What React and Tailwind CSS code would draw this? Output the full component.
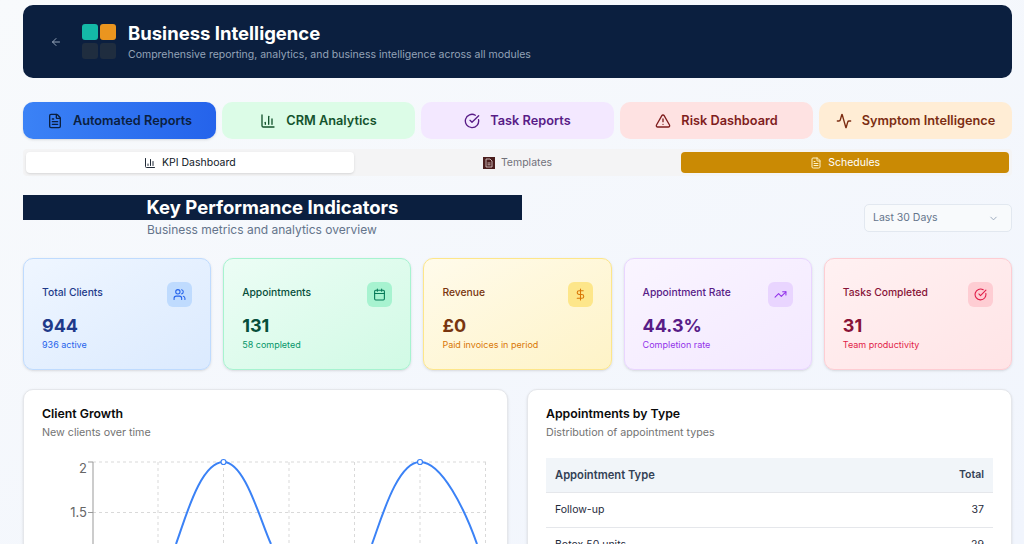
import { ArrowLeft, FileText, BarChart3, CircleCheckBig, TriangleAlert, Activity, ChevronDown, Users, Calendar, DollarSign, TrendingUp } from "lucide-react";

const mainTabs = [
  { label: "Automated Reports", icon: FileText, box: "bg-gradient-to-r from-[#3b82f6] to-[#2563eb] shadow-sm", text: "text-[#0b1f3f]" },
  { label: "CRM Analytics", icon: BarChart3, box: "bg-[#dcfce7]", text: "text-[#14532d]" },
  { label: "Task Reports", icon: CircleCheckBig, box: "bg-[#f3e8ff]", text: "text-[#581c87]" },
  { label: "Risk Dashboard", icon: TriangleAlert, box: "bg-[#fee2e2]", text: "text-[#7f1d1d]" },
  { label: "Symptom Intelligence", icon: Activity, box: "bg-[#ffedd5]", text: "text-[#7c2d12]" },
];

const kpis = [
  { title: "Total Clients", value: "944", note: "936 active", icon: Users, box: "from-[#eff6ff] to-[#dbeafe] border-[#bfdbfe]", titleC: "text-[#1e3a8a]", valueC: "text-[#1e3a8a]", noteC: "text-[#2563eb]", iconBox: "bg-[#bfdbfe]", iconC: "text-[#2563eb]" },
  { title: "Appointments", value: "131", note: "58 completed", icon: Calendar, box: "from-[#ecfdf5] to-[#d1fae5] border-[#a7f3d0]", titleC: "text-[#064e3b]", valueC: "text-[#064e3b]", noteC: "text-[#059669]", iconBox: "bg-[#a7f3d0]", iconC: "text-[#047857]" },
  { title: "Revenue", value: "£0", note: "Paid invoices in period", icon: DollarSign, box: "from-[#fffbeb] to-[#fef3c7] border-[#fde68a]", titleC: "text-[#78350f]", valueC: "text-[#78350f]", noteC: "text-[#d97706]", iconBox: "bg-[#fde68a]", iconC: "text-[#d97706]" },
  { title: "Appointment Rate", value: "44.3%", note: "Completion rate", icon: TrendingUp, box: "from-[#faf5ff] to-[#f3e8ff] border-[#e9d5ff]", titleC: "text-[#581c87]", valueC: "text-[#581c87]", noteC: "text-[#9333ea]", iconBox: "bg-[#e9d5ff]", iconC: "text-[#9333ea]" },
  { title: "Tasks Completed", value: "31", note: "Team productivity", icon: CircleCheckBig, box: "from-[#fff1f2] to-[#ffe4e6] border-[#fecdd3]", titleC: "text-[#881337]", valueC: "text-[#881337]", noteC: "text-[#e11d48]", iconBox: "bg-[#fecdd3]", iconC: "text-[#e11d48]" },
];

const gridXs = [158, 223.5, 289, 354.5, 420, 485.5];

const GrowthChart = () => (
  <svg className="mt-[14px] block h-[88px] w-[483px]" viewBox="24 456 483 88">
    {gridXs.map((x) => (
      <line key={x} x1={x} y1="462" x2={x} y2="544" stroke="#d9d9d9" strokeDasharray="3 3" />
    ))}
    <line x1="93" y1="462" x2="486" y2="462" stroke="#d9d9d9" strokeDasharray="3 3" />
    <line x1="93" y1="512.500" x2="486" y2="512.500" stroke="#d9d9d9" strokeDasharray="3 3" />
    <line x1="93" y1="462" x2="93" y2="544" stroke="#999999" />
    <line x1="88" y1="462" x2="93" y2="462" stroke="#999999" />
    <line x1="88" y1="512.500" x2="93" y2="512.500" stroke="#999999" />
    <text x="87" y="473" textAnchor="end" fontSize="13" fill="#666666" fontFamily="Inter, sans-serif">2</text>
    <text x="87" y="517" textAnchor="end" fontSize="13" fill="#666666" fontFamily="Inter, sans-serif">1.5</text>
    <path d="M176 544 C185 520 200 462 223.5 462 C245 462 260 520 271 544" fill="none" stroke="#3b82f6" strokeWidth="2" />
    <path d="M372 544 C381 520 397 462 420 462 C442 462 465 510 477 544" fill="none" stroke="#3b82f6" strokeWidth="2" />
    <circle cx="223.5" cy="462" r="2.5" fill="#fff" stroke="#3b82f6" strokeWidth="1.2" />
    <circle cx="420" cy="462" r="2.5" fill="#fff" stroke="#3b82f6" strokeWidth="1.2" />
  </svg>
);

const App = () => {
  return (
    <div className="h-[544px] w-[1024px] overflow-hidden bg-gradient-to-br from-[#f8fafc] to-[#f1f5fd] pl-[23px] pr-[12px] pt-[5px] font-['Inter',sans-serif]">
      <div className="flex h-[73px] items-center rounded-[10px] bg-[#0b1f3f] pl-[27px]">
        <ArrowLeft className="h-[12px] w-[12px] text-[#94a3b8]" />
        <div className="ml-[20px] grid grid-cols-[16px_16px] gap-x-[2px] gap-y-[3px]">
          <span className="h-[16px] w-[16px] rounded-[3px] bg-[#14b8a6]" />
          <span className="h-[16px] w-[16px] rounded-[3px] bg-[#ea951f]" />
          <span className="h-[16px] w-[16px] rounded-[3px] bg-[#1f2d3f]" />
          <span className="h-[16px] w-[16px] rounded-[3px] bg-[#1f2d3f]" />
        </div>
        <div className="ml-[12px]">
          <h1 className="mb-[1px] mt-[-1px] text-[18.5px] font-bold leading-[26px] text-white">Business Intelligence</h1>
          <p className="text-[10.5px] leading-[16px] text-[#94a3b8]">Comprehensive reporting, analytics, and business intelligence across all modules</p>
        </div>
      </div>

      <div className="mt-[24px] grid grid-cols-5 gap-[6px]">
        {mainTabs.map((t) => (
          <button key={t.label} className={`flex h-[37px] items-center justify-center gap-[10px] rounded-[10px] ${t.box}`}>
            <t.icon className={`h-[16px] w-[16px] ${t.text}`} />
            <span className={`text-[12.75px] font-semibold ${t.text}`}>{t.label}</span>
          </button>
        ))}
      </div>

      <div className="mt-[10px] grid h-[27px] grid-cols-3 items-center rounded-[4px] bg-[#f4f4f5] px-[3px]">
        <div className="flex h-[21px] items-center justify-center gap-[6px] rounded-[4px] bg-white shadow-sm">
          <BarChart3 className="h-[12px] w-[12px] text-[#1f2937]" />
          <span className="text-[10.5px] text-[#111827]">KPI Dashboard</span>
        </div>
        <div className="flex h-[21px] items-center justify-center gap-[6px]">
          <svg className="h-[12px] w-[12px]" viewBox="0 0 12 12">
            <rect width="12" height="12" fill="#4a1d1d" />
            <path d="M3 2h4l2 2v6H3zM4.500 6h3M4.500 7.800h3" fill="none" stroke="#e5d5d5" strokeWidth="0.8" />
          </svg>
          <span className="text-[10.5px] text-[#71717a]">Templates</span>
        </div>
        <div className="flex h-[21px] items-center justify-center gap-[6px] rounded-[4px] bg-[#ca8a04]">
          <FileText className="h-[12px] w-[12px] text-[#fef3c7]" />
          <span className="text-[10.5px] text-white">Schedules</span>
        </div>
      </div>

      <div className="mt-[19px] flex items-start justify-between">
        <div className="w-[499px]">
          <h2 className="h-[25px] bg-[#0b1f3f] text-center text-[18.5px] font-bold leading-[25px] text-white">Key Performance Indicators</h2>
          <p className="mt-[1px] pl-[124px] text-[12px] leading-[18px] text-[#64748b]">Business metrics and analytics overview</p>
        </div>
        <div className="mt-[9px] flex h-[28px] w-[148px] items-center justify-between rounded-[5px] border border-[#e2e8f0] bg-[#f8fafc] pl-[8px] pr-[12px]">
          <span className="text-[10.5px] text-[#64748b]">Last 30 Days</span>
          <ChevronDown className="h-[11px] w-[11px] text-[#94a3b8]" />
        </div>
      </div>

      <div className="mt-[19px] grid grid-cols-5 gap-[12px]">
        {kpis.map((k) => (
          <div key={k.title} className={`h-[112px] rounded-[10px] border bg-gradient-to-br p-[18px] shadow-sm ${k.box}`}>
            <div className="flex items-start justify-between">
              <span className={`mt-[8px] text-[10.3px] font-medium ${k.titleC}`}>{k.title}</span>
              <span className={`mt-[5px] flex h-[25px] w-[25px] items-center justify-center rounded-[6px] ${k.iconBox}`}>
                <k.icon className={`h-[13px] w-[13px] ${k.iconC}`} />
              </span>
            </div>
            <div className={`mt-[5px] text-[18px] font-bold leading-[28px] ${k.valueC}`}>{k.value}</div>
            <div className={`text-[9px] leading-[10px] ${k.noteC}`}>{k.note}</div>
          </div>
        ))}
      </div>

      <div className="mt-[19px] grid grid-cols-2 gap-[19px]">
        <div className="h-[200px] overflow-hidden rounded-[10px] border border-[#e5e7eb] bg-white shadow-sm">
          <div className="px-[18px] pt-[15px]">
            <h3 className="text-[12.3px] font-semibold leading-[18px] text-[#0a0a0a]">Client Growth</h3>
            <p className="mt-[1px] text-[10.7px] leading-[18px] text-[#737373]">New clients over time</p>
          </div>
          <GrowthChart />
        </div>
        <div className="h-[200px] overflow-hidden rounded-[10px] border border-[#e5e7eb] bg-white shadow-sm">
          <div className="px-[18px] pt-[15px]">
            <h3 className="text-[12.3px] font-semibold leading-[18px] text-[#0a0a0a]">Appointments by Type</h3>
            <p className="mt-[1px] text-[10.7px] leading-[18px] text-[#737373]">Distribution of appointment types</p>
            <table className="mt-[16px] w-full text-[10.5px]">
              <thead>
                <tr className="h-[34px] border-b border-[#e5e7eb] bg-[#f1f5f9] text-[#334155]">
                  <th className="pl-[9px] pt-[1px] text-left text-[11.2px] font-semibold">Appointment Type</th>
                  <th className="pr-[9px] pt-[1px] text-right font-semibold">Total</th>
                </tr>
              </thead>
              <tbody className="text-[#1e293b]">
                <tr className="h-[35px] border-b border-[#e5e7eb]">
                  <td className="pl-[9px]">Follow-up</td>
                  <td className="pr-[9px] text-right">37</td>
                </tr>
                <tr className="h-[35px]">
                  <td className="pl-[9px]">Botox 50 units</td>
                  <td className="pr-[9px] text-right">29</td>
                </tr>
              </tbody>
            </table>
          </div>
        </div>
      </div>
    </div>
  );
};

export default App;
